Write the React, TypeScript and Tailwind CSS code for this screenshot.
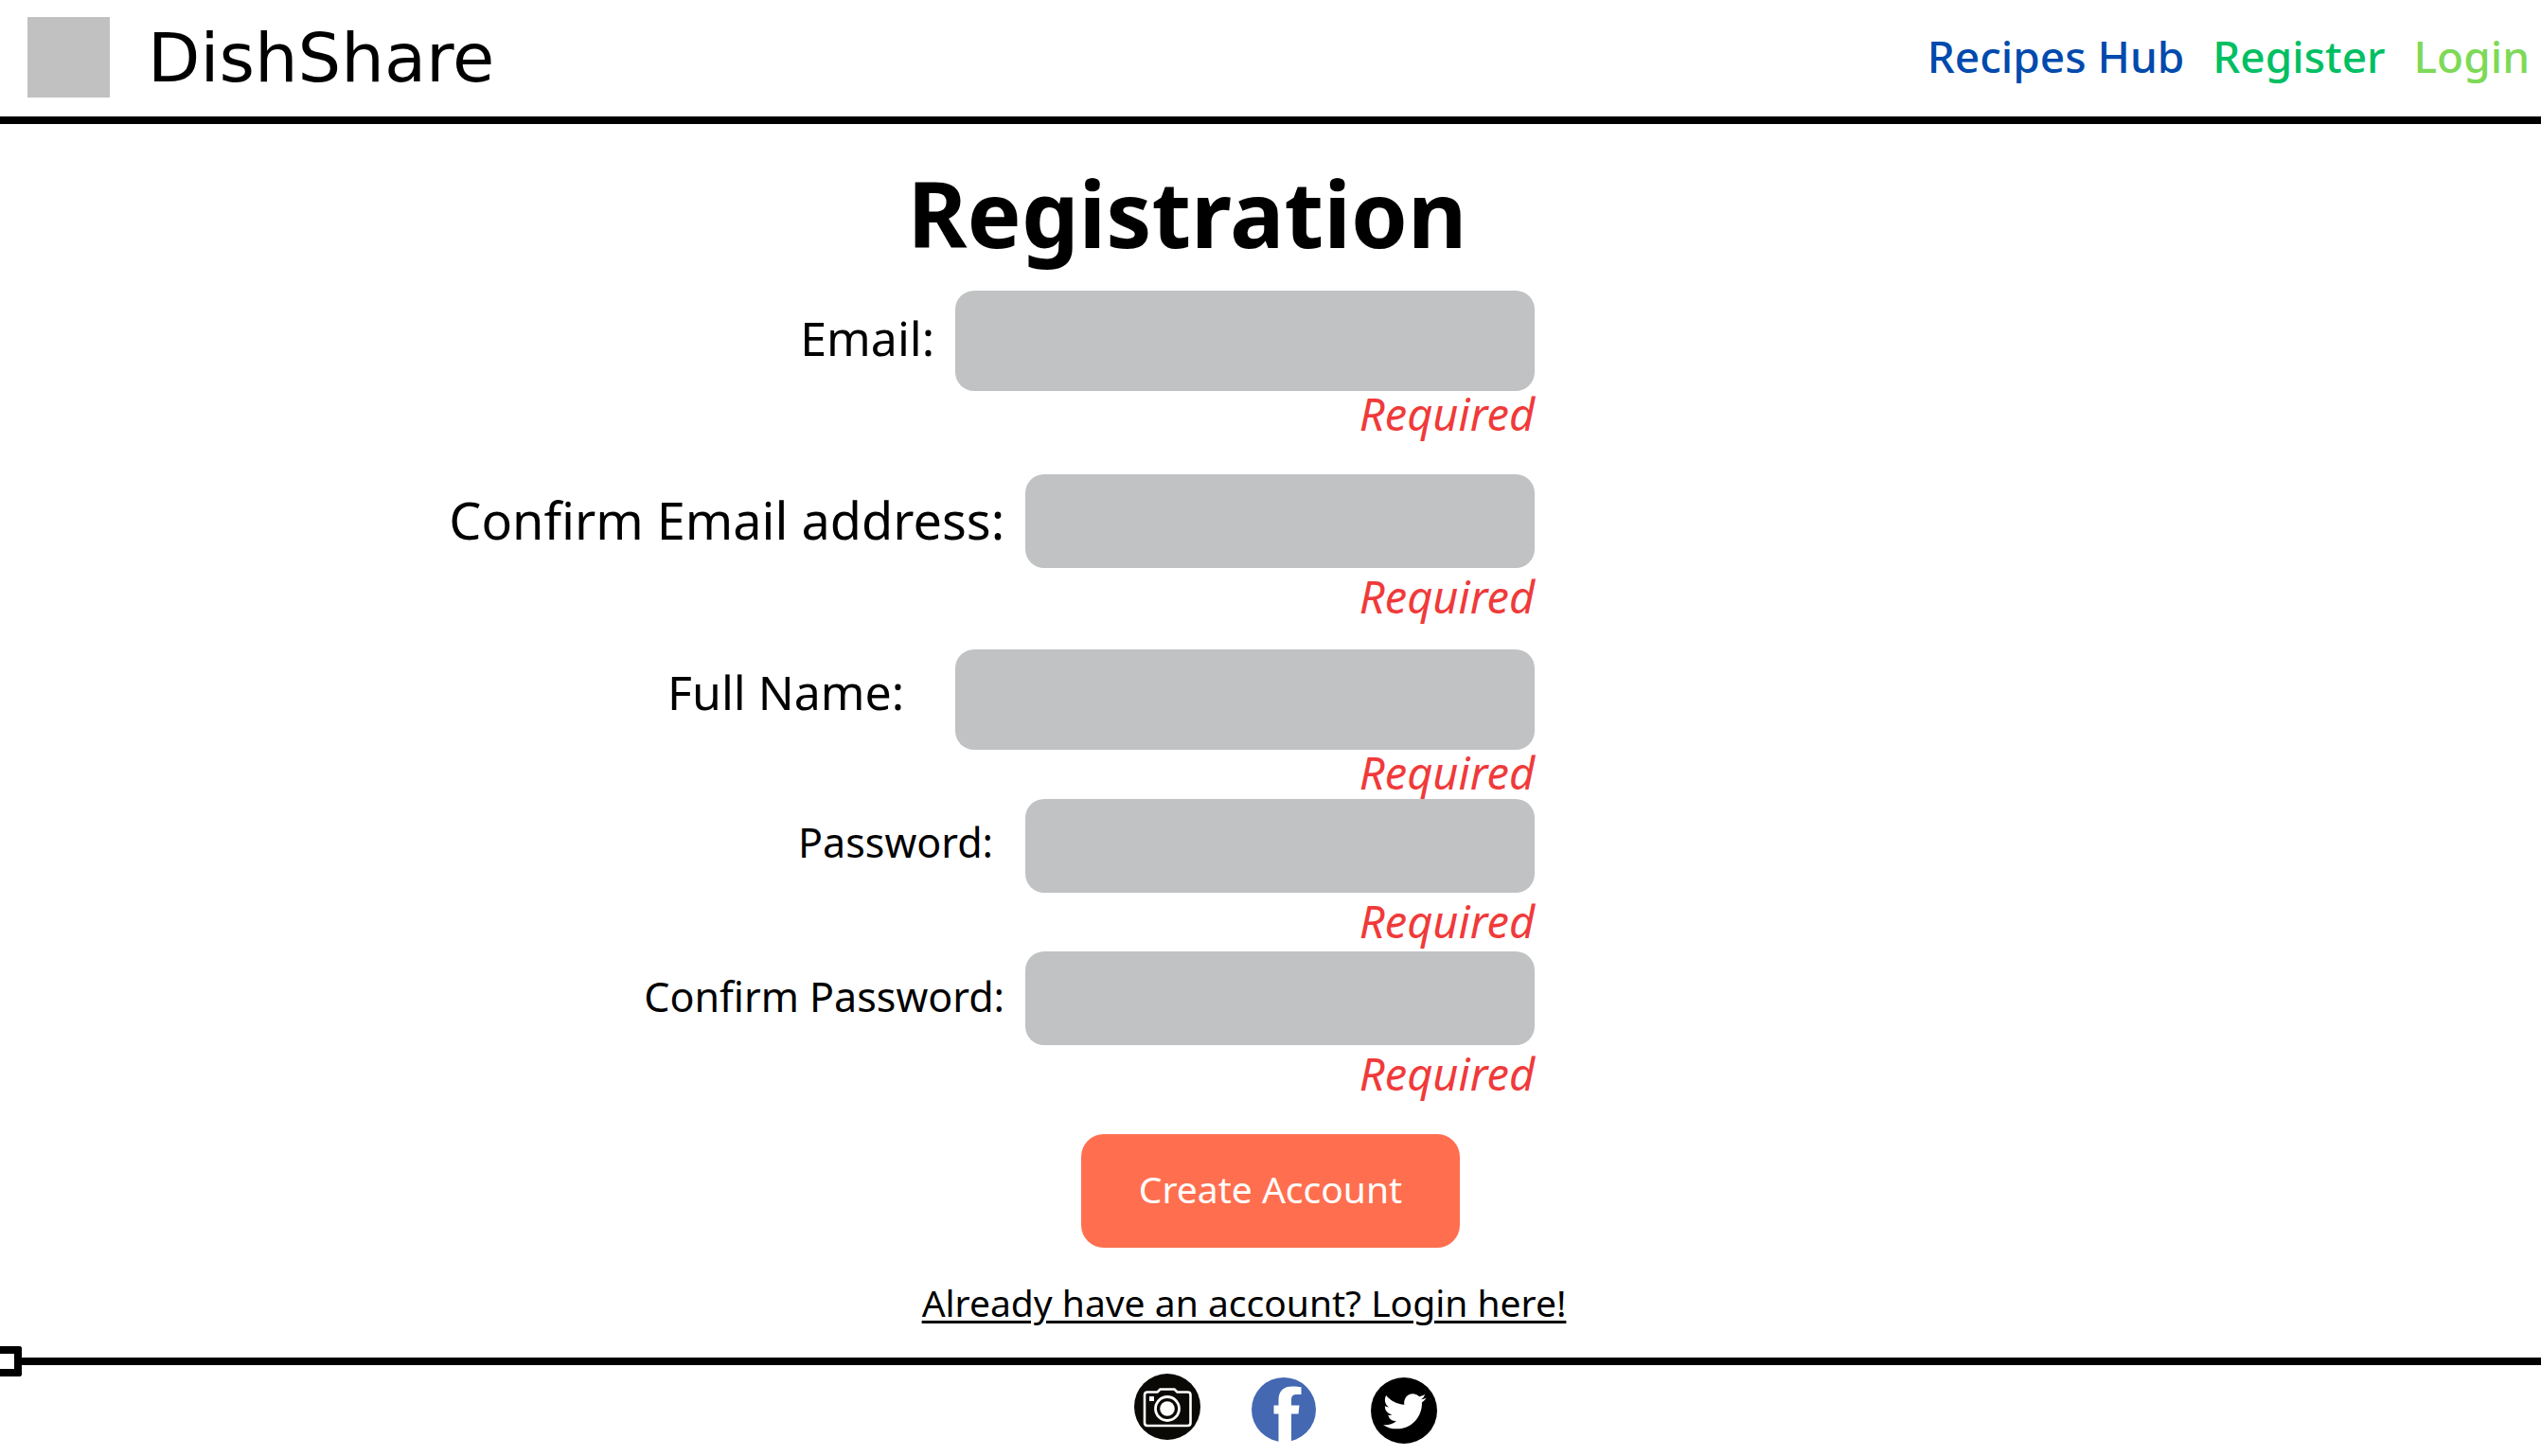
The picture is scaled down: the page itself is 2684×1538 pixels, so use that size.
type Field = {
  id: string;
  label: string;
  type: string;
  row: string;
  labelStyle: string;
  inputStyle: string;
  noteStyle: string;
};

const WIDE = "h-[106px] w-[612px]";
const NARROW = "h-[99px] w-[538px]";

const fields: Field[] = [
  {
    id: "email",
    label: "Email:",
    type: "email",
    row: "",
    labelStyle: "text-[50px] leading-[100px]",
    inputStyle: WIDE,
    noteStyle: "",
  },
  {
    id: "confirm-email",
    label: "Confirm Email address:",
    type: "email",
    row: "mt-10",
    labelStyle: "text-[54px] leading-24",
    inputStyle: NARROW,
    noteStyle: "mt-1.5",
  },
  {
    id: "full-name",
    label: "Full Name:",
    type: "text",
    row: "mt-8",
    labelStyle: "pr-8 text-[50px] leading-[90px]",
    inputStyle: WIDE,
    noteStyle: "",
  },
  {
    id: "password",
    label: "Password:",
    type: "password",
    row: "mt-1",
    labelStyle: "pr-3 text-[43px] leading-[92px]",
    inputStyle: NARROW,
    noteStyle: "mt-1.5",
  },
  {
    id: "confirm-password",
    label: "Confirm Password:",
    type: "password",
    row: "mt-2",
    labelStyle: "text-[43px] leading-24",
    inputStyle: NARROW,
    noteStyle: "mt-1.5",
  },
];

function FormRow({ field }: { field: Field }) {
  return (
    <div className={`flex flex-col items-end ${field.row}`}>
      <div className="flex items-start gap-[22px]">
        <label htmlFor={field.id} className={`whitespace-nowrap ${field.labelStyle}`}>
          {field.label}
        </label>
        <input
          id={field.id}
          name={field.id}
          type={field.type}
          required
          aria-describedby={`${field.id}-note`}
          className={`rounded-[20px] bg-[#c0c2c3] px-6 text-[43px] outline-none ${field.inputStyle}`}
        />
      </div>
      <p
        id={`${field.id}-note`}
        className={`text-[47px] leading-12 text-[#f03a3a] italic ${field.noteStyle}`}
      >
        Required
      </p>
    </div>
  );
}

function CameraIcon() {
  return (
    <svg viewBox="0 0 70 70" className="size-[70px]" aria-hidden="true">
      <circle cx="35" cy="35" r="35" fill="#0b0906" />
      <path
        d="M14 19.5H24.5L27.500 16.500H42.500L45.500 19.500H56.500Q59.500 19.500 59.500 22.500V52Q59.500 55 56.500 55H14Q11 55 11 52V22.500Q11 19.500 14 19.500Z"
        fill="none"
        stroke="#fff"
        strokeWidth="2.600"
      />
      <rect x="16" y="24" width="5" height="5" fill="#fff" />
      <circle cx="35" cy="37" r="12.500" fill="#0b0906" stroke="#fff" strokeWidth="2.800" />
      <circle cx="35" cy="37" r="7.800" fill="#fff" />
    </svg>
  );
}

function FacebookIcon() {
  return (
    <svg viewBox="0 0 68 68" className="size-[68px]" aria-hidden="true">
      <circle cx="34" cy="34" r="34" fill="#4468b2" />
      <path
        d="M28.500 68V38.500H23.500V29.500H28.500V24C28.500 14 34 9.500 43 9.500C47 9.500 50 9.700 52.500 10.200V18H47.500C43.500 18 42 20 42 24V29.500H50.500L49.500 38.500H42V68Z"
        fill="#fff"
      />
    </svg>
  );
}

function TwitterIcon() {
  return (
    <svg viewBox="0 0 70 70" className="size-[70px]" aria-hidden="true">
      <circle cx="35" cy="35" r="35" fill="#000" />
      <path
        transform="translate(13 13) scale(1.900)"
        d="M23.953 4.57a10 10 0 01-2.825.775 4.958 4.958 0 002.163-2.723c-.951.555-2.005.959-3.127 1.184a4.92 4.92 0 00-8.384 4.482C7.69 8.095 4.067 6.13 1.64 3.162a4.822 4.822 0 00-.666 2.475c0 1.71.87 3.213 2.188 4.096a4.904 4.904 0 01-2.228-.616v.06a4.923 4.923 0 003.946 4.827 4.996 4.996 0 01-2.212.085 4.936 4.936 0 004.604 3.417 9.867 9.867 0 01-6.102 2.105c-.39 0-.779-.023-1.17-.067a13.995 13.995 0 007.557 2.209c9.053 0 13.998-7.496 13.998-13.985 0-.21 0-.42-.015-.63A9.935 9.935 0 0024 4.59z"
        fill="#fff"
      />
    </svg>
  );
}

export default function App() {
  return (
    <div className="min-h-screen bg-white font-['Noto_Sans',sans-serif] text-black">
      <header className="flex items-center justify-between border-b-8 border-black pt-[18px] pr-3 pb-5 pl-[29px]">
        <div className="flex items-center gap-10">
          <div className="h-[85px] w-[87px] bg-[#c1c1c1]" />
          <span className="font-['DejaVu_Sans',sans-serif] text-7xl">DishShare</span>
        </div>
        <nav className="flex gap-[30px] pb-1 text-[46px] leading-16 font-medium">
          <a href="#recipes" className="text-[#004aad]">
            Recipes Hub
          </a>
          <a href="#register" className="text-[#00bf63]">
            Register
          </a>
          <a href="#login" className="text-[#7ed957]">
            Login
          </a>
        </nav>
      </header>

      <main className="pt-[46px] pb-7">
        <h1 className="pr-44 text-center text-8xl leading-24 font-bold">Registration</h1>
        <form className="mt-[34px]" onSubmit={(e) => e.preventDefault()}>
          <div className="w-[60.4%]">
            {fields.map((field) => (
              <FormRow key={field.id} field={field} />
            ))}
          </div>
          <button
            type="submit"
            className="mx-auto mt-10 block h-[120px] w-[400px] rounded-3xl bg-[#ff6f4f] pb-1 text-[39px] text-white"
          >
            Create Account
          </button>
        </form>
        <p className="mt-7 pr-14 text-center text-[39px] leading-[60px]">
          <a href="#login" className="underline decoration-3 underline-offset-4">
            Already have an account? Login here!
          </a>
        </p>
      </main>

      <footer className="relative border-t-8 border-black">
        <span className="absolute -top-5 left-0 h-8 w-[23px] rounded-r-[3px] border-y-8 border-r-8 border-black bg-white" />
        <div className="flex items-start justify-center gap-[54px] pt-[9px] pl-8">
          <a href="#photos" aria-label="Photos">
            <CameraIcon />
          </a>
          <a href="#facebook" aria-label="Facebook" className="pt-1">
            <FacebookIcon />
          </a>
          <a href="#twitter" aria-label="Twitter" className="pt-1 pl-1">
            <TwitterIcon />
          </a>
        </div>
      </footer>
    </div>
  );
}
